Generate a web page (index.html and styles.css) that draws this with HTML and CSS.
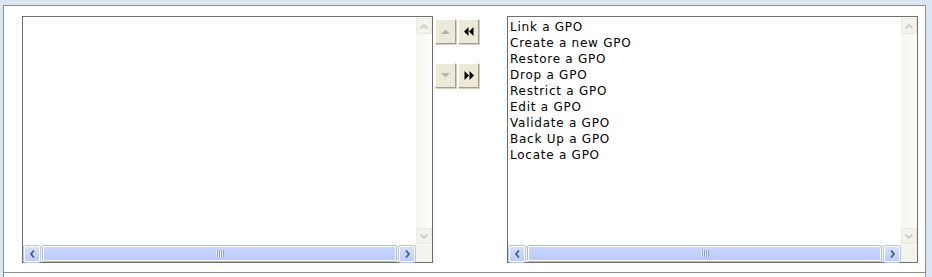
FILE: index.html
```html
<!DOCTYPE html>
<html lang="en">
<head>
    <meta charset="UTF-8">
    <title>GPO Tasks</title>
    <link rel="stylesheet" href="styles.css">
</head>
<body>
    <div class="panel">
        <div class="listbox">
            <div class="items"></div>
            <div class="vscroll">
                <div class="vbtn"><svg width="8" height="5" viewBox="0 0 8 5"><path d="M0.5 4.5 L4 1 L7.5 4.5" fill="none" stroke="#c8c8bc" stroke-width="1.6"/></svg></div>
                <div class="vbtn"><svg width="8" height="5" viewBox="0 0 8 5"><path d="M0.5 0.5 L4 4 L7.5 0.5" fill="none" stroke="#c8c8bc" stroke-width="1.6"/></svg></div>
            </div>
            <div class="hscroll">
                <div class="hbtn"><svg width="5" height="8" viewBox="0 0 5 8"><path d="M4 0.5 L1 4 L4 7.5" fill="none" stroke="#4d6185" stroke-width="1.8"/></svg></div>
                <div class="thumb"><span class="grip"></span></div>
                <div class="hbtn"><svg width="5" height="8" viewBox="0 0 5 8"><path d="M1 0.5 L4 4 L1 7.5" fill="none" stroke="#4d6185" stroke-width="1.8"/></svg></div>
            </div>
            <div class="corner"></div>
        </div>

        <div class="mover">
            <div class="btn-row">
                <button class="btn disabled"><svg width="9" height="5" viewBox="0 0 9 5"><path d="M0 5 L4.5 0.5 L9 5 Z" fill="#b4b4a8"/></svg></button>
                <button class="btn"><svg width="10" height="9" viewBox="0 0 10 9"><path d="M4.5 0 L0 4.5 L4.5 9 Z M9.5 0 L5 4.5 L9.5 9 Z" fill="#000"/></svg></button>
            </div>
            <div class="btn-row">
                <button class="btn disabled"><svg width="9" height="5" viewBox="0 0 9 5"><path d="M0 0 L4.5 4.5 L9 0 Z" fill="#b4b4a8"/></svg></button>
                <button class="btn"><svg width="10" height="9" viewBox="0 0 10 9"><path d="M0.5 0 L5 4.5 L0.5 9 Z M5.5 0 L10 4.5 L5.5 9 Z" fill="#000"/></svg></button>
            </div>
        </div>

        <div class="listbox right">
            <div class="items">
                <div>Link a GPO</div>
                <div>Create a new GPO</div>
                <div>Restore a GPO</div>
                <div>Drop a GPO</div>
                <div>Restrict a GPO</div>
                <div>Edit a GPO</div>
                <div>Validate a GPO</div>
                <div>Back Up a GPO</div>
                <div>Locate a GPO</div>
            </div>
            <div class="vscroll">
                <div class="vbtn"><svg width="8" height="5" viewBox="0 0 8 5"><path d="M0.5 4.5 L4 1 L7.5 4.5" fill="none" stroke="#c8c8bc" stroke-width="1.6"/></svg></div>
                <div class="vbtn"><svg width="8" height="5" viewBox="0 0 8 5"><path d="M0.5 0.5 L4 4 L7.5 0.5" fill="none" stroke="#c8c8bc" stroke-width="1.6"/></svg></div>
            </div>
            <div class="hscroll">
                <div class="hbtn"><svg width="5" height="8" viewBox="0 0 5 8"><path d="M4 0.5 L1 4 L4 7.5" fill="none" stroke="#4d6185" stroke-width="1.8"/></svg></div>
                <div class="thumb"><span class="grip"></span></div>
                <div class="hbtn"><svg width="5" height="8" viewBox="0 0 5 8"><path d="M1 0.5 L4 4 L1 7.5" fill="none" stroke="#4d6185" stroke-width="1.8"/></svg></div>
            </div>
            <div class="corner"></div>
        </div>
    </div>
    <div class="below"></div>
</body>
</html>
```

FILE: styles.css
```css
body {
    margin: 0;
    background-color: #dbe6f4;
    font-family: "DejaVu Sans", Verdana, sans-serif;
    font-size: 12px;
    height: 277px;
    overflow: hidden;
}
.panel {
    margin: 5px 6px 0 3px;
    height: 256px;
    padding: 10px 7px 0 18px;
    background-color: #fff;
    border: 1px solid #8d8d8d;
    display: flex;
    align-items: flex-start;
}
.below {
    margin: 0 6px 0 3px;
    height: 10px;
    background-color: #fff;
    border-left: 1px solid #8d8d8d;
    border-right: 1px solid #8d8d8d;
}
.listbox {
    width: 409px;
    height: 245px;
    border: 1px solid #6f6f6f;
    display: grid;
    grid-template-columns: 1fr 16px;
    grid-template-rows: 1fr 17px;
}
.items {
    padding: 2px 0 0 2px;
    line-height: 16px;
    letter-spacing: 0.75px;
    color: #000;
    white-space: nowrap;
    overflow: hidden;
}
.vscroll {
    background: linear-gradient(to right, #f6f5ee, #fcfcf9);
    display: flex;
    flex-direction: column;
    justify-content: space-between;
}
.vbtn {
    width: 14px;
    height: 14px;
    margin: 1px 1px 1px 0;
    border: 1px solid #e9e8e0;
    border-radius: 2px;
    background-color: #f3f2eb;
    display: flex;
    align-items: center;
    justify-content: center;
}
.hscroll {
    background-color: #f7f6f0;
    display: flex;
    align-items: center;
    padding: 0 1px;
    gap: 1px;
}
.hbtn {
    width: 14px;
    height: 14px;
    border: 1px solid #fff;
    border-radius: 2px;
    background: linear-gradient(#d6e0fb, #bccdf7);
    box-shadow: 0 0 0 1px #b7c5eb;
    display: flex;
    align-items: center;
    justify-content: center;
}
.thumb {
    flex: 1;
    height: 13px;
    margin: 0 2px;
    border: 1px solid #fff;
    border-radius: 2px;
    background: linear-gradient(#c9d7fd, #b8cbfb);
    box-shadow: 0 0 0 1px #a7b8e4;
    display: flex;
    align-items: center;
    justify-content: center;
}
.grip {
    width: 8px;
    height: 7px;
    background: repeating-linear-gradient(to right, #eef2fe 0 1px, #8c9fd8 1px 2px);
}
.corner {
    background-color: #f4f3ec;
}
.mover {
    margin-left: 2px;
    padding-top: 3px;
    display: flex;
    flex-direction: column;
    gap: 19px;
}
.btn-row {
    display: flex;
    gap: 2px;
}
.btn {
    width: 21px;
    height: 25px;
    padding: 0;
    background-color: #ece9d8;
    border: 1px solid;
    border-color: #fff #a19f92 #a19f92 #fff;
    box-shadow: 1px 1px 0 #d2cfbf;
    display: flex;
    align-items: center;
    justify-content: center;
}
.right {
    margin-left: 28px;
}
```
